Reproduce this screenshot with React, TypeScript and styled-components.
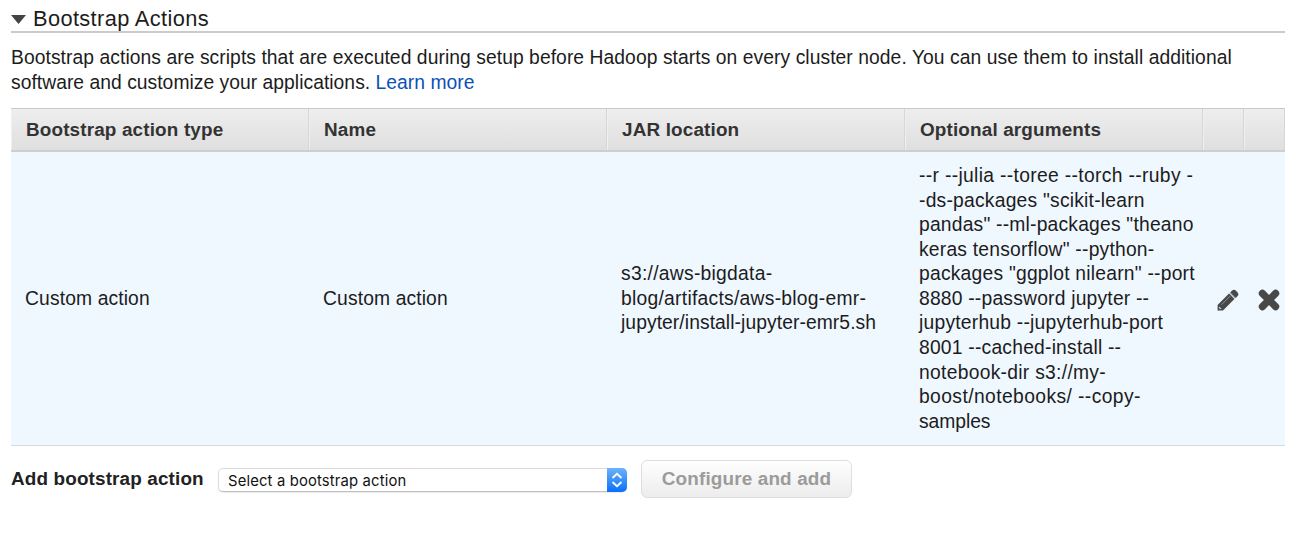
import React from "react";
import styled, { createGlobalStyle } from "styled-components";

const GlobalStyle = createGlobalStyle`
  body {
    margin: 0;
    background: #fff;
    color: #1c1c1c;
    font-family: "Liberation Sans", Arial, sans-serif;
    font-size: 19.3px;
    line-height: 24.6px;
  }
`;

const Page = styled.main`
  width: 1274px;
  padding: 5px 0 0 11px;
`;

const SectionHeader = styled.header`
  display: flex;
  align-items: center;
  gap: 7px;
  height: 26px;
  border-bottom: 2px solid #cbcbcb;
`;

const Disclosure = styled.svg`
  width: 15px;
  height: 9px;
  margin-top: 2px;
  fill: #444;
`;

const Title = styled.h2`
  margin: 0;
  padding-top: 2px;
  font-size: 21.8px;
  font-weight: 400;
  letter-spacing: 0.37px;
  white-space: nowrap;
`;

const Intro = styled.div`
  margin: 13px 0 13px;
  white-space: nowrap;
`;

const Link = styled.a`
  color: #0a50b9;
  text-decoration: none;
`;

const columns = "298px 298px 298px 298px 41px 41px";

const HeadRow = styled.div`
  display: grid;
  grid-template-columns: ${columns};
  box-sizing: border-box;
  height: 44px;
  border-top: 1px solid #c8c8c8;
  border-bottom: 2px solid #cecece;
  background: linear-gradient(#eeeeee, #dfdfdf);
`;

const HeadCell = styled.div`
  box-sizing: border-box;
  padding: 9px 0 0 14px;
  border-left: 1px solid #f0f0f0;
  border-right: 1px solid #d6d6d6;
  color: #333;
  font-size: 18.9px;
  font-weight: 700;
  letter-spacing: 0.15px;
  white-space: nowrap;
`;

const BodyRow = styled.div`
  display: grid;
  grid-template-columns: ${columns};
  align-items: center;
  box-sizing: border-box;
  height: 294px;
  border-bottom: 1px solid #d6d9dc;
  background: #eff7ff;
`;

const Cell = styled.div`
  padding: 1px 0 0 14px;
  white-space: nowrap;
`;

const IconCell = styled.div`
  display: flex;
  justify-content: flex-end;
  padding: 2px 5.5px 0 0;
`;

const Line = styled.div<{ $spacing: number }>`
  letter-spacing: ${({ $spacing }) => $spacing}px;
`;

const AddRow = styled.div`
  display: flex;
  align-items: center;
  height: 38px;
  margin-top: 14px;
`;

const AddLabel = styled.label`
  width: 207px;
  color: #222;
  font-size: 18.9px;
  font-weight: 700;
  letter-spacing: 0.14px;
  white-space: nowrap;
`;

const Picker = styled.div`
  display: flex;
  justify-content: space-between;
  box-sizing: border-box;
  width: 409px;
  height: 24px;
  margin-top: 2px;
  border: 1px solid #dcdcdc;
  border-bottom-color: #c0c0c0;
  border-radius: 5px;
  background: #fff;
  box-shadow: 0 1px 1px rgba(0, 0, 0, 0.08);
`;

const PickerText = styled.span`
  padding-left: 9px;
  color: #111;
  font-family: Inter, sans-serif;
  font-size: 14.8px;
  letter-spacing: 0.16px;
  line-height: 24px;
`;

const Stepper = styled.span`
  display: flex;
  align-items: center;
  justify-content: center;
  width: 20px;
  height: 24px;
  margin: -1px -1px 0 0;
  border-radius: 0 5px 5px 0;
  background: linear-gradient(#6cb3fa, #0a70fb);
`;

const AddButton = styled.button`
  box-sizing: border-box;
  width: 211px;
  height: 38px;
  margin-left: 14px;
  padding: 0 0 1px;
  border: 1px solid #dedede;
  border-radius: 6px;
  background: linear-gradient(#fefefe, #ececec);
  color: #9b9b9b;
  font: 700 18.9px "Liberation Sans", Arial, sans-serif;
  letter-spacing: 0.15px;
  white-space: nowrap;
`;

const headings = ["Bootstrap action type", "Name", "JAR location", "Optional arguments", "", ""];

type TextLine = [text: string, spacing: number];

const jarLines: TextLine[] = [
  ["s3://aws-bigdata-", 0.27],
  ["blog/artifacts/aws-blog-emr-", 0.26],
  ["jupyter/install-jupyter-emr5.sh", 0.07],
];

const argumentLines: TextLine[] = [
  ["--r --julia --toree --torch --ruby -", 0.33],
  ["-ds-packages \"scikit-learn", 0.22],
  ["pandas\" --ml-packages \"theano", 0.2],
  ["keras tensorflow\" --python-", 0.21],
  ["packages \"ggplot nilearn\" --port", 0.22],
  ["8880 --password jupyter --", 0.2],
  ["jupyterhub --jupyterhub-port", 0.22],
  ["8001 --cached-install --", 0.21],
  ["notebook-dir s3://my-", 0.28],
  ["boost/notebooks/ --copy-", 0.4],
  ["samples", -0.05],
];

const PencilIcon = () => (
  <svg width="22" height="22" viewBox="0 0 22 22">
    <path fill="#484848" d="M0.6 21.4V16L12 4.6l5.4 5.4L6 21.4zM13.2 3.5l1.9-1.9q2-1.7 3.7 0l1.8 1.8q1.6 1.8 0 3.6l-1.9 1.9z" />
    <path fill="none" stroke="#8b9095" strokeWidth="1" d="M4.4 15.8L13 7.2M12.6 4.1l5.5 5.3" />
    <path fill="#d5dce3" d="M2 17.4l2.6 2.6-1.3.3-1.6-1.6z" />
  </svg>
);

const CrossIcon = () => (
  <svg width="22" height="22" viewBox="0 0 22 22">
    <path fill="none" stroke="#484848" strokeWidth="7.2" strokeLinecap="round" d="M4.4 4.4l13.2 13.2M17.6 4.4L4.4 17.6" />
  </svg>
);

const Lines = ({ lines }: { lines: TextLine[] }) => (
  <>
    {lines.map(([text, spacing]) => (
      <Line key={text} $spacing={spacing}>
        {text}
      </Line>
    ))}
  </>
);

export default function App() {
  return (
    <>
      <GlobalStyle />
      <Page>
        <SectionHeader>
          <Disclosure viewBox="0 0 15 9">
            <path d="M0 0h15L7.5 9z" />
          </Disclosure>
          <Title>Bootstrap Actions</Title>
        </SectionHeader>
        <Intro>
          <Line $spacing={0.06}>
            Bootstrap actions are scripts that are executed during setup before Hadoop starts on every cluster node. You
            can use them to install additional
          </Line>
          <Line $spacing={0.03}>
            software and customize your applications. <Link>Learn more</Link>
          </Line>
        </Intro>
        <HeadRow>
          {headings.map((heading, i) => (
            <HeadCell key={i}>{heading}</HeadCell>
          ))}
        </HeadRow>
        <BodyRow>
          <Cell>
            <Line $spacing={0.12}>Custom action</Line>
          </Cell>
          <Cell>
            <Line $spacing={0.12}>Custom action</Line>
          </Cell>
          <Cell>
            <Lines lines={jarLines} />
          </Cell>
          <Cell>
            <Lines lines={argumentLines} />
          </Cell>
          <IconCell>
            <PencilIcon />
          </IconCell>
          <IconCell>
            <CrossIcon />
          </IconCell>
        </BodyRow>
        <AddRow>
          <AddLabel>Add bootstrap action</AddLabel>
          <Picker>
            <PickerText>Select a bootstrap action</PickerText>
            <Stepper>
              <svg width="12" height="16" viewBox="0 0 12 16" fill="none" stroke="#fff" strokeWidth="1.8">
                <path d="M1.5 6L6 1.8 10.5 6M1.5 10L6 14.2 10.5 10" />
              </svg>
            </Stepper>
          </Picker>
          <AddButton disabled>Configure and add</AddButton>
        </AddRow>
      </Page>
    </>
  );
}
